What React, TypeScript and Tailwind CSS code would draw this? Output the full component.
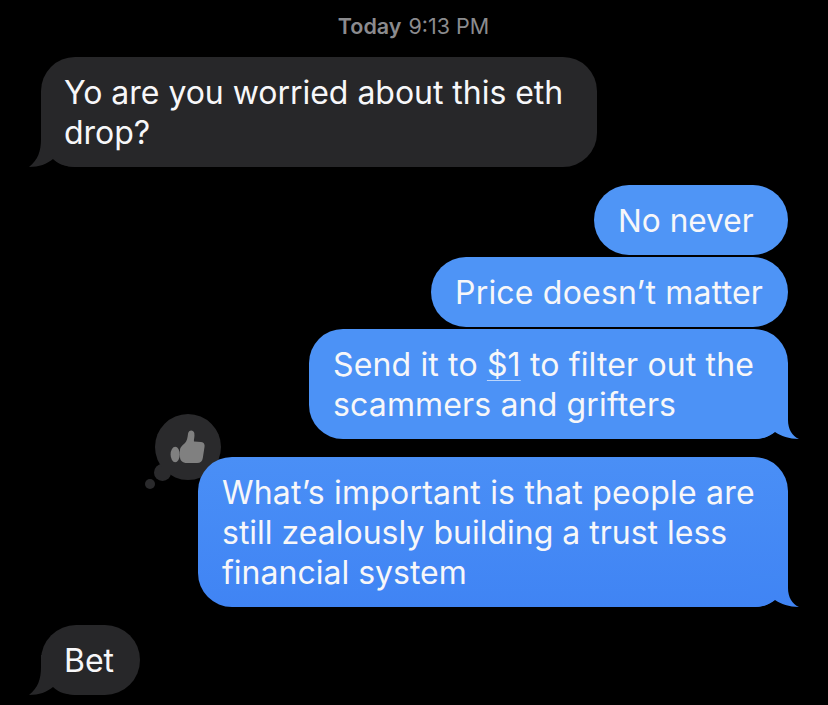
import React from "react";

function TailLeft({ color }: { color: string }) {
  return (
    <svg className="absolute left-[-12px] bottom-0" width="51" height="40" viewBox="0 0 51 40">
      <path d="M12 0 L12 12 C12 24 9 33 0 40 C10 40 18 37 24 32 C30 38 38 40 50 40 L50 0 Z" fill={color} />
    </svg>
  );
}

function TailRight({ id, top, bottom }: { id: string; top: string; bottom: string }) {
  return (
    <svg className="absolute right-[-12px] bottom-0" width="50" height="34" viewBox="0 0 50 34">
      <defs>
        <linearGradient id={id} x1="0" y1="0" x2="0" y2="1">
          <stop offset="0" stopColor={top} />
          <stop offset="1" stopColor={bottom} />
        </linearGradient>
      </defs>
      <path d="M38 0 L38 15 C38 24 42 31 49 34 C39 34 31 31 25 27 C20 31 14 34 5 34 L0 34 L0 0 Z" fill={`url(#${id})`} />
    </svg>
  );
}

function Thumb() {
  return (
    <svg width="36" height="36" viewBox="0 0 36 36">
      <ellipse cx="5.2" cy="25.5" rx="4.6" ry="7.8" fill="#808080" />
      <path
        d="M10 21 C10 18 13 16 15 14 C17 12 17.5 9 18 5 C18.5 0.5 23.5 0.5 24.3 4 C25 8 23.5 10.5 24 12.5 L31 13 C34 13.3 35 15.5 34.5 18 L32.8 29 C32.3 32.5 30.5 34 27 34 L17 34 C12.5 34 10 31.5 10 28 Z"
        fill="#808080"
      />
    </svg>
  );
}

const textCls = "relative whitespace-nowrap";

export default function App() {
  return (
    <div className="h-[705px] w-[828px] overflow-hidden bg-black font-['Inter','Liberation_Sans',sans-serif] text-[32px] leading-[40px] text-[#f7f7f9]">
      <div className="flex h-[57px] items-start justify-center pt-[12px] pr-[1px] text-[21.5px] leading-[28px] text-[#8b8b8e]">
        <span className="font-semibold">Today</span>
        <span className="ml-[7px]">9:13 PM</span>
      </div>

      <div className="flex flex-col pl-[41px] pr-[40px]">
        <div className="flex justify-start">
          <div className="relative w-[556px] rounded-[34px] bg-[#272729] pl-[23px] pt-[16px] pb-[14px]">
            <TailLeft color="#272729" />
            <div className={`${textCls} tracking-[-0.03px]`}>
              Yo are you worried about this eth
              <br />
              drop?
            </div>
          </div>
        </div>

        <div className="mt-[18px] flex flex-col items-end gap-[2px]">
          <div className="w-[194px] rounded-[35px] bg-[#4f95f6] pl-[24px] pt-[16px] pb-[14px]">
            <div className={`${textCls} text-[31.6px]`}>No never</div>
          </div>
          <div className="w-[357px] rounded-[35px] bg-[#4e94f6] pl-[24px] pt-[16px] pb-[14px]">
            <div className={`${textCls} tracking-[0.2px]`}>Price doesn’t matter</div>
          </div>
          <div className="relative w-[479px] rounded-[34px] bg-[#4c92f6] pl-[24px] pt-[16px] pb-[14px]">
            <TailRight id="tail-send" top="#4c92f6" bottom="#4c92f6" />
            <div className={`${textCls} tracking-[0.15px]`}>
              Send it to <span className="underline decoration-[#bcd6fb] decoration-1 underline-offset-4">$1</span> to filter out the
              <br />
              scammers and grifters
            </div>
          </div>
        </div>

        <div className="relative mt-[18px] flex justify-end">
          <div className="absolute left-[104px] top-[22px] size-[10px] rounded-full bg-[#2a2a2c]" />
          <div className="absolute left-[113px] top-[7px] size-[17px] rounded-full bg-[#2a2a2c]" />
          <div className="absolute left-[114px] top-[-43px] flex size-[66px] items-center justify-center rounded-full bg-[#2a2a2c]">
            <Thumb />
          </div>
          <div className="relative w-[590px] rounded-[34px] bg-gradient-to-b from-[#4a8ff6] to-[#4084f4] pl-[24px] pt-[16px] pb-[14px]">
            <TailRight id="tail-what" top="#4287f4" bottom="#4084f4" />
            <div className={textCls}>
              <span className="tracking-[0.2px]">What’s important is that people are</span>
              <br />
              still zealously building a trust less
              <br />
              financial system
            </div>
          </div>
        </div>

        <div className="mt-[18px] flex justify-start">
          <div className="relative w-[99px] rounded-[35px] bg-[#272729] pl-[23px] pt-[16px] pb-[14px]">
            <TailLeft color="#272729" />
            <div className={textCls}>Bet</div>
          </div>
        </div>
      </div>
    </div>
  );
}
